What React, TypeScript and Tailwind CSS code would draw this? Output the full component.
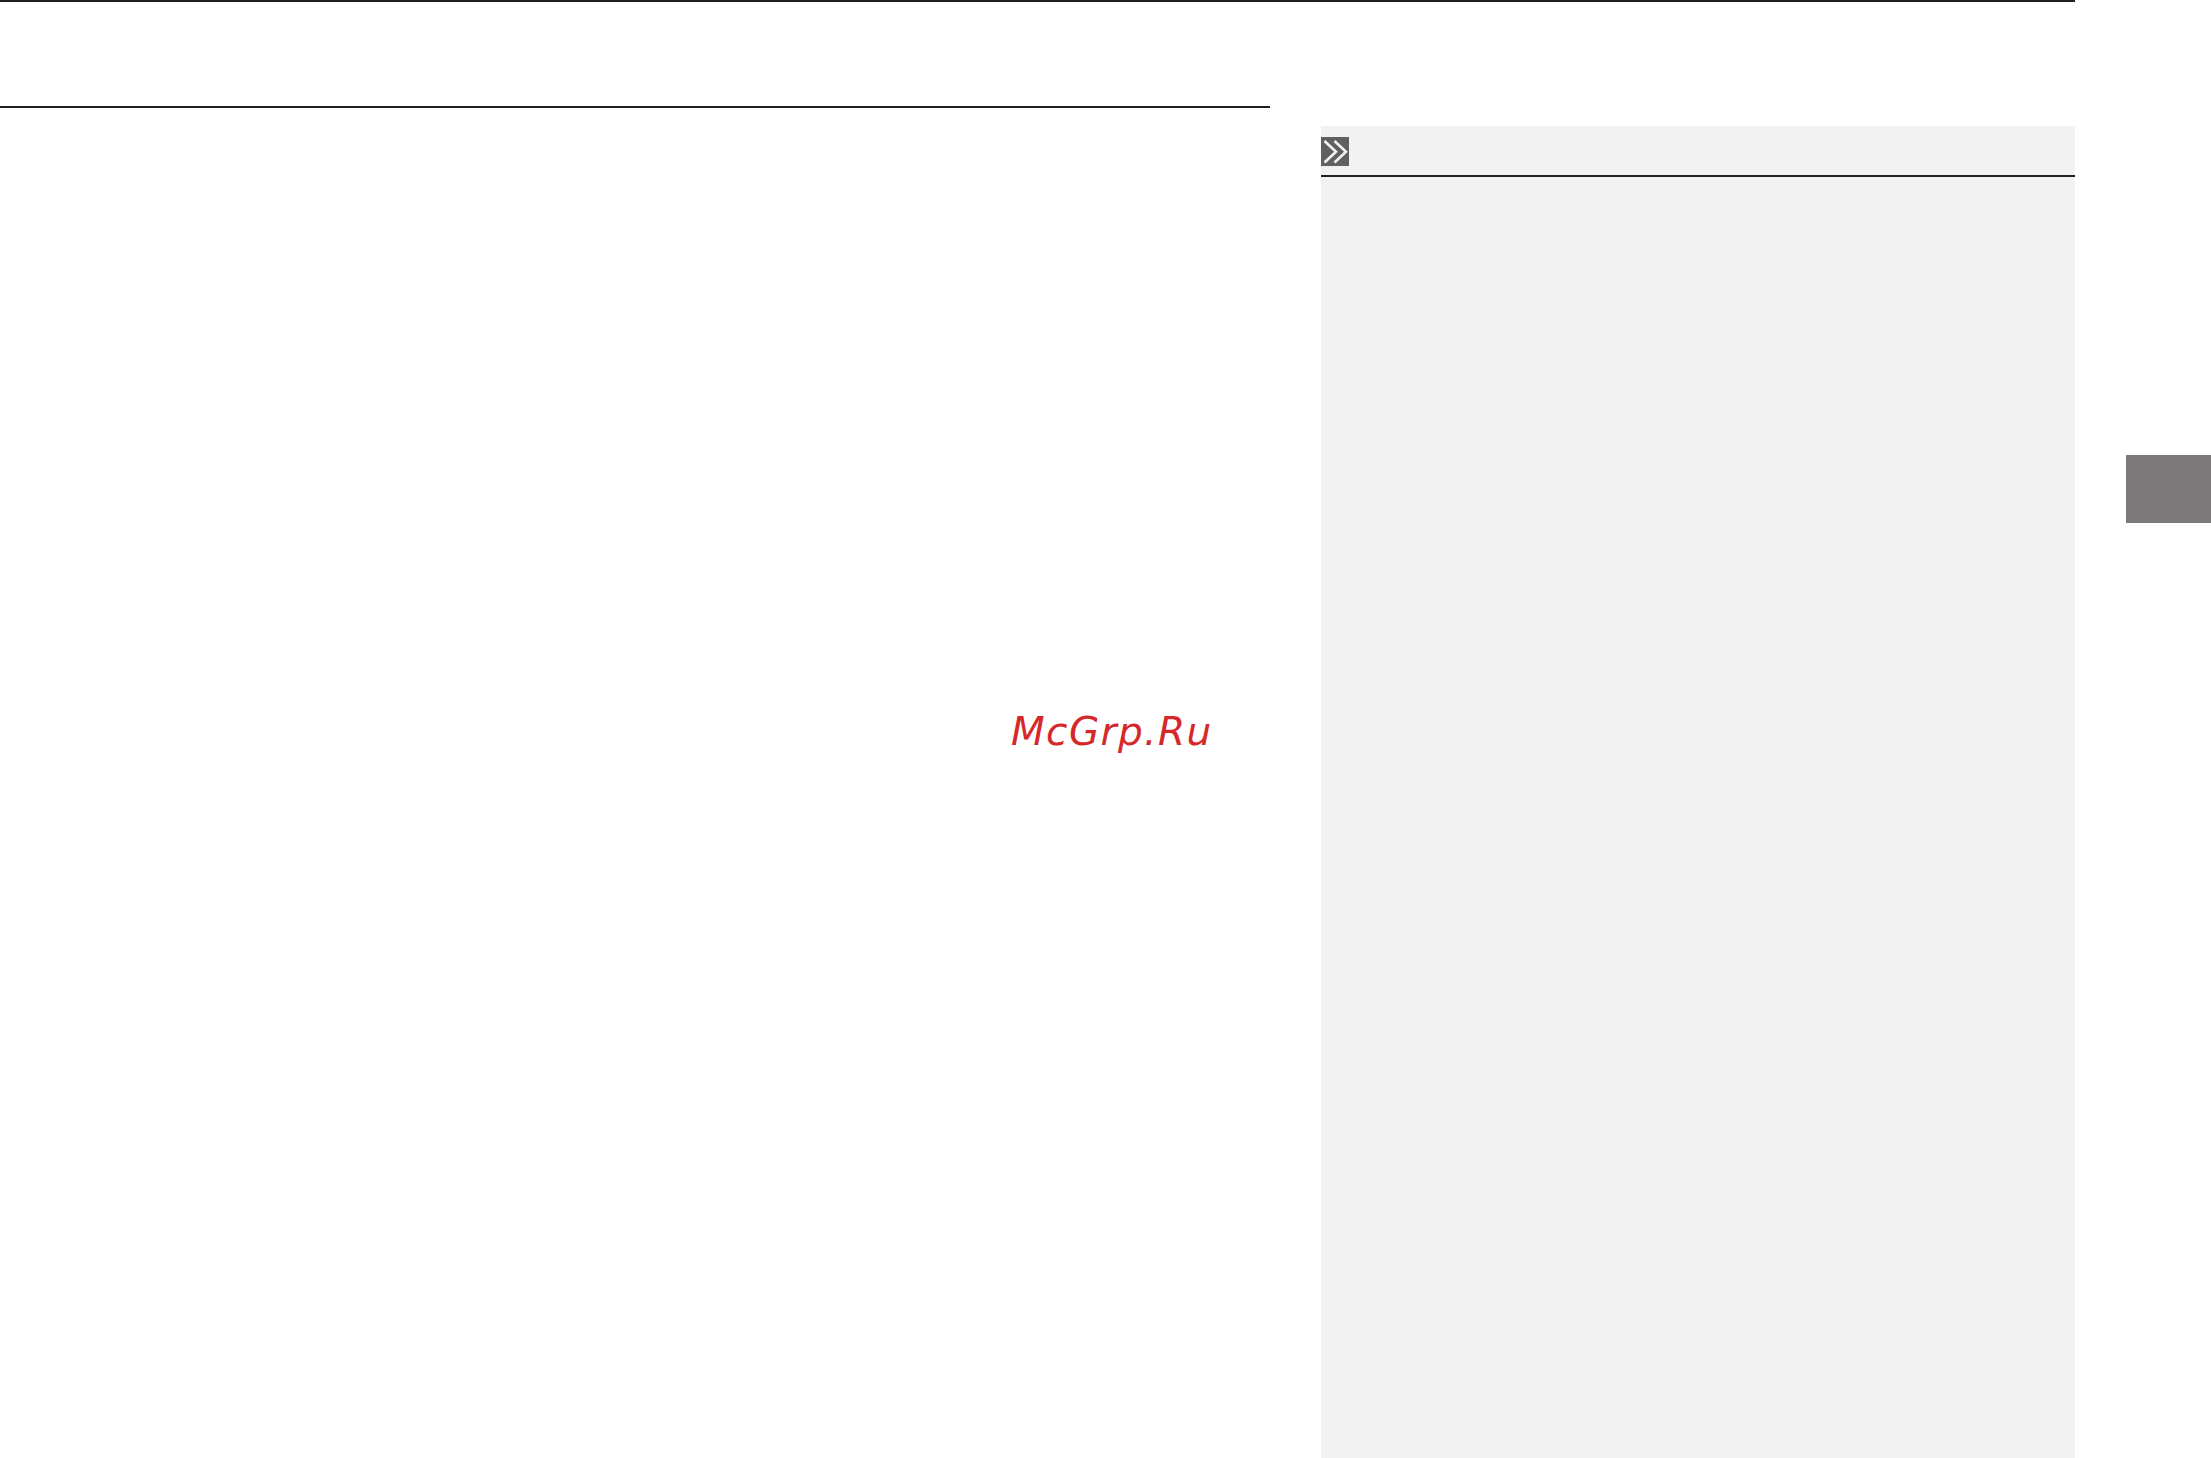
import React from "react";

const DoubleChevron = () => (
  <svg viewBox="0 0 28 29" className="block h-full w-full" fill="none" stroke="#f2f2f2" strokeWidth="2.6">
    <path d="M3.5 4 L15 14.7 L3.5 25.5" />
    <path d="M13.5 4 L25 14.7 L13.5 25.5" />
  </svg>
);

export default function App() {
  return (
    <div className="h-[1458px] w-[2211px] overflow-hidden bg-white font-['Liberation_Sans',sans-serif]">
      {/* top rule */}
      <div className="h-[2px] w-[2075px] bg-[#231f20]" />

      <div className="flex h-[1456px]">
        {/* main column */}
        <div className="w-[1270px] shrink-0">
          <div className="mt-[104px] h-[2px] bg-[#231f20]" />
          <div className="mt-[602px] pl-[1011px] font-['DejaVu_Sans',sans-serif] text-[39px] leading-[44px] tracking-[1.4px] text-[#d62828] italic">
            McGrp.Ru
          </div>
        </div>

        {/* side note panel */}
        <div className="mt-[124px] ml-[51px] w-[754px] shrink-0 bg-[#f2f2f2]">
          <div className="mt-[11px] h-[29px] w-[28px] bg-[#606060]">
            <DoubleChevron />
          </div>
          <div className="mt-[9px] h-[2px] bg-[#231f20]" />
        </div>

        {/* chapter tab */}
        <div className="mt-[453px] ml-[51px] h-[68px] w-[85px] shrink-0 bg-[#7c7a7a]" />
      </div>
    </div>
  );
}
